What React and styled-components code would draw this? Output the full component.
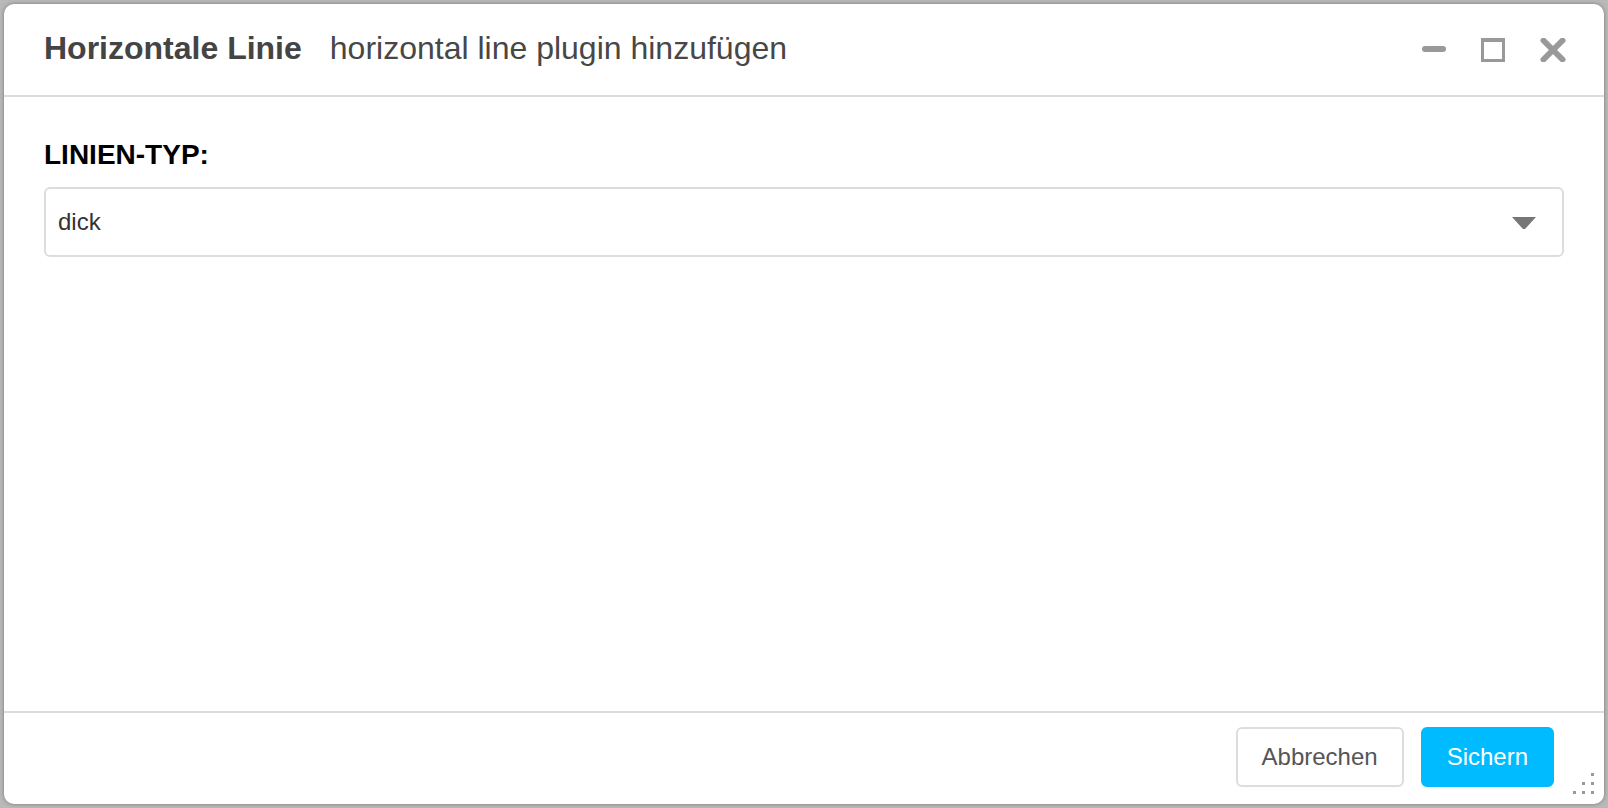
import React from "react";
import styled, { createGlobalStyle } from "styled-components";

const GlobalStyle = createGlobalStyle`
    html, body {
        margin: 0;
        padding: 0;
        background: #b9b9b9;
        font-family: "Liberation Sans", Arial, sans-serif;
    }
`;

function App() {
    return (
        <Page>
            <GlobalStyle />
            <Dialog>
                <Header>
                    <Title>Horizontale Linie</Title>
                    <Subtitle>horizontal line plugin hinzufügen</Subtitle>
                    <Controls>
                        <Control aria-label="minimieren">
                            <svg width="24" height="24" viewBox="0 0 24 24">
                                <rect x="0" y="8" width="24" height="6" rx="3" fill="#999" />
                            </svg>
                        </Control>
                        <Control aria-label="maximieren">
                            <svg width="24" height="24" viewBox="0 0 24 24">
                                <rect x="1.5" y="1.5" width="21" height="21" fill="none" stroke="#999" strokeWidth="3" />
                                <rect x="0" y="0" width="24" height="4" fill="#999" />
                            </svg>
                        </Control>
                        <Control aria-label="schließen">
                            <svg width="26" height="24" viewBox="0 0 26 24">
                                <path d="M3.5 2.5 L22.5 21.5 M22.5 2.5 L3.5 21.5" stroke="#999" strokeWidth="6" strokeLinecap="round" />
                            </svg>
                        </Control>
                    </Controls>
                </Header>
                <Body>
                    <Label>LINIEN-TYP:</Label>
                    <Select>
                        <SelectValue>dick</SelectValue>
                        <svg width="24" height="12" viewBox="0 0 24 12">
                            <path d="M0 0 H24 L13.5 11.5 Q12 12.5 10.5 11.5 Z" fill="#777" />
                        </svg>
                    </Select>
                </Body>
                <Footer>
                    <Button>Abbrechen</Button>
                    <Button primary>Sichern</Button>
                    <Grip>
                        <Dot style={{ gridColumn: 3, gridRow: 1 }} />
                        <Dot style={{ gridColumn: 2, gridRow: 2 }} />
                        <Dot style={{ gridColumn: 3, gridRow: 2 }} />
                        <Dot style={{ gridColumn: 1, gridRow: 3 }} />
                        <Dot style={{ gridColumn: 2, gridRow: 3 }} />
                        <Dot style={{ gridColumn: 3, gridRow: 3 }} />
                    </Grip>
                </Footer>
            </Dialog>
        </Page>
    );
}

export default App;

const Page = styled.div`
    width: 1608px;
    height: 808px;
    padding: 4px;
    box-sizing: border-box;
`;

const Dialog = styled.div`
    position: relative;
    width: 1600px;
    height: 800px;
    display: flex;
    flex-direction: column;
    background: #ffffff;
    border-radius: 10px;
    box-shadow: 0 0 4px rgba(0, 0, 0, 0.35);
    overflow: hidden;
`;

const Header = styled.div`
    height: 93px;
    display: flex;
    align-items: center;
    padding: 0 38px 4px 40px;
    box-sizing: border-box;
    border-bottom: 2px solid #dcdcdc;
    flex-shrink: 0;
    color: #444444;
`;

const Title = styled.h1`
    margin: 0;
    font-size: 32px;
    line-height: 40px;
    font-weight: bold;
`;

const Subtitle = styled.span`
    margin-left: 28px;
    font-size: 32px;
    line-height: 40px;
    color: #474747;
`;

const Controls = styled.div`
    margin-left: auto;
    display: flex;
    align-items: center;
    gap: 35px;
    padding-top: 4px;
`;

const Control = styled.div`
    display: flex;
    align-items: center;
    svg {
        display: block;
    }
`;

const Body = styled.div`
    flex: 1;
    padding: 42px 40px 0;
`;

const Label = styled.div`
    font-size: 28px;
    line-height: 32px;
    font-weight: bold;
    color: #000000;
    margin-bottom: 16px;
`;

const Select = styled.div`
    height: 70px;
    box-sizing: border-box;
    border: 2px solid #dddddd;
    border-radius: 6px;
    display: flex;
    align-items: center;
    justify-content: space-between;
    padding: 0 26px 0 12px;
    svg {
        display: block;
        margin-top: 2px;
    }
`;

const SelectValue = styled.span`
    font-size: 24px;
    line-height: 28px;
    color: #333333;
`;

const Footer = styled.div`
    position: relative;
    flex-shrink: 0;
    height: 93px;
    box-sizing: border-box;
    border-top: 2px solid #dcdcdc;
    display: flex;
    justify-content: flex-end;
    align-items: center;
    gap: 17px;
    padding: 0 50px 3px 0;
`;

const Button = styled.button`
    height: 60px;
    box-sizing: border-box;
    padding: 0 24px;
    border-radius: 6px;
    border: 2px solid ${(p) => (p.primary ? "#00bbff" : "#dddddd")};
    background: ${(p) => (p.primary ? "#00bbff" : "#ffffff")};
    color: ${(p) => (p.primary ? "#ffffff" : "#555555")};
    font-family: "Liberation Sans", Arial, sans-serif;
    font-size: 24px;
    cursor: pointer;
`;

const Grip = styled.div`
    position: absolute;
    right: 10px;
    bottom: 10px;
    display: grid;
    grid-template-columns: repeat(3, 3px);
    grid-template-rows: repeat(3, 3px);
    gap: 6px;
`;

const Dot = styled.span`
    width: 3px;
    height: 3px;
    background: #999999;
`;
